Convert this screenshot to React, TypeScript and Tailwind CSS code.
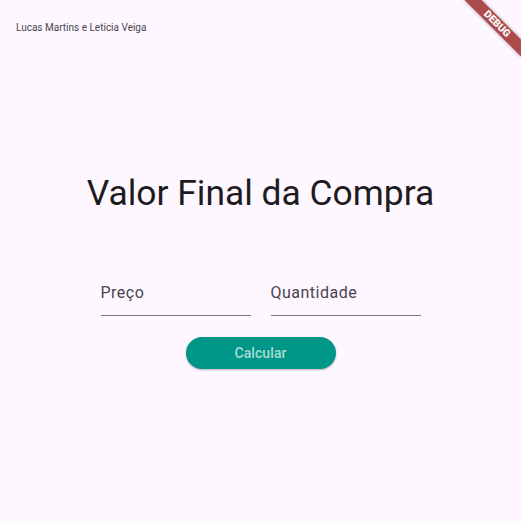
import React from "react";

export default function App() {
  return (
    <div
      className="relative w-full h-[523px] overflow-hidden bg-[#fef7ff]"
      style={{ fontFamily: "Roboto, 'Noto Sans', sans-serif" }}
    >
      <div className="pt-[21px] pl-[16px] text-[10px] leading-[14px] text-[#49454f]">
        Lucas Martins e Letícia Veiga
      </div>

      <div className="flex flex-col items-center pt-[136px]">
        <h1 className="text-[35.4px] leading-[44px] text-[#1d1b20] font-normal">
          Valor Final da Compra
        </h1>

        <div className="mt-[53px] flex gap-[20px]">
          <div className="w-[150px] h-[48px] border-b border-[#79747e] flex items-center pt-[3px]">
            <span className="text-[16px] leading-[24px] tracking-[0.5px] text-[#49454f]">Preço</span>
          </div>
          <div className="w-[150px] h-[48px] border-b border-[#79747e] flex items-center pt-[3px]">
            <span className="text-[16px] leading-[24px] tracking-[0.5px] text-[#49454f]">Quantidade</span>
          </div>
        </div>

        <button className="mt-[21px] w-[150px] h-[32px] rounded-full bg-[#009688] text-[#a7ddd3] text-[14px] font-medium tracking-[0.1px] shadow-[0_1px_2px_rgba(0,0,0,0.3)]">
          Calcular
        </button>
      </div>

      <div className="absolute left-[457px] top-[18px] w-[80px] h-[12px] rotate-45 bg-[#ad4a4c] shadow-[0_0_4px_rgba(0,0,0,0.35)] flex items-center justify-center">
        <span className="text-white text-[10.2px] leading-none font-black">DEBUG</span>
      </div>
    </div>
  );
}
